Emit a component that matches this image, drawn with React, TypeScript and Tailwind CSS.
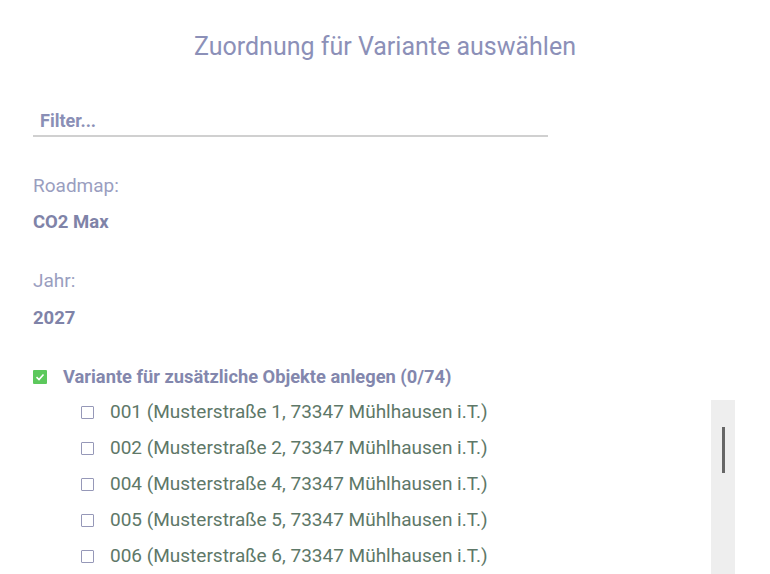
import React from "react";

const items = [
  "001 (Musterstraße 1, 73347 Mühlhausen i.T.)",
  "002 (Musterstraße 2, 73347 Mühlhausen i.T.)",
  "004 (Musterstraße 4, 73347 Mühlhausen i.T.)",
  "005 (Musterstraße 5, 73347 Mühlhausen i.T.)",
  "006 (Musterstraße 6, 73347 Mühlhausen i.T.)",
];

export default function App() {
  return (
    <div
      className="w-[770px] h-[574px] overflow-hidden bg-white"
      style={{ fontFamily: "Roboto, 'Noto Sans', sans-serif" }}
    >
      <div className="pt-[32px] text-center text-[25px] leading-[30px] text-[#8c90b8]">
        Zuordnung für Variante auswählen
      </div>
      <div className="ml-[33px] mt-[47px] w-[515px] border-b-2 border-[#d0d0d0] pb-[2px]">
        <div className="pl-[7px] text-[18px] leading-[24px] font-bold text-[#8a8fb6]">Filter...</div>
      </div>
      <div className="ml-[33px] mt-[37px] text-[19px] leading-[24px] text-[#9a9ebf]">Roadmap:</div>
      <div className="ml-[33px] mt-[12px] text-[18.5px] leading-[24px] font-bold text-[#7f83a8]">CO2 Max</div>
      <div className="ml-[33px] mt-[35px] text-[19px] leading-[24px] text-[#9a9ebf]">Jahr:</div>
      <div className="ml-[33px] mt-[13px] text-[18.5px] leading-[24px] font-bold text-[#7f83a8]">2027</div>
      <div className="ml-[33px] mt-[35px] flex items-center gap-[16px]">
        <div className="w-[14px] h-[14px] bg-[#5cc85c] flex items-center justify-center rounded-[1px]">
          <svg width="10" height="10" viewBox="0 0 10 10">
            <path d="M1.5 5.2 L4 7.5 L8.5 2.5" stroke="white" strokeWidth="1.6" fill="none" />
          </svg>
        </div>
        <div className="text-[18.3px] leading-[24px] font-bold text-[#8387ad]">
          Variante für zusätzliche Objekte anlegen (0/74)
        </div>
      </div>
      <div className="flex mt-[5px]">
        <div className="flex-1 pl-[81px] flex flex-col">
          {items.map((t) => (
            <div key={t} className="h-[36px] flex items-center gap-[16px]">
              <div className="w-[13px] h-[13px] border-[1.5px] border-[#9698b8] rounded-[1px]" />
              <div className="text-[19px] leading-[24px] text-[#5e7868]">{t}</div>
            </div>
          ))}
        </div>
        <div className="w-[24px] mr-[35px] mt-[6px] h-[200px] bg-[#eeeeee] relative">
          <div className="absolute left-[11px] top-[27px] w-[3px] h-[46px] bg-[#666666]" />
        </div>
      </div>
    </div>
  );
}
